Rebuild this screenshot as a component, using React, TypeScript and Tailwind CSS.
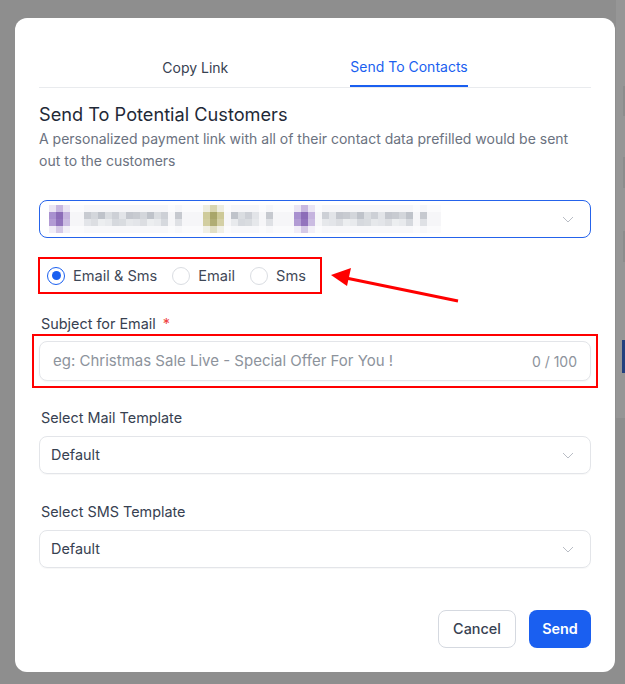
import React from "react";

const F = { fontFamily: "Inter, 'Noto Sans', sans-serif" };

type Col = string[];
const faint: Col = ["#fbfbfc", "#f6f6f8", "#f6f6f8", "#fbfbfc"];
const purple: Col[] = [
  ["#ebe5f3", "#a890cf", "#b29bd4", "#f1edf7"],
  ["#c9b8e0", "#8c6cb8", "#9273bd", "#d5c9e6"],
  ["#ebe5f3", "#c5b3de", "#cbbce2", "#f3f0f8"],
];
const olive: Col[] = [
  ["#eeeddf", "#cfcb9b", "#d2cea0", "#f1f0e6"],
  ["#d9d6b0", "#a9a66a", "#b0ad74", "#e1dfc5"],
  ["#eeeddf", "#cdc997", "#d4d0a5", "#f1f0e6"],
];
const g1 = ["#c8cbd1", "#d3d6db", "#bfc3ca", "#dadde1", "#cdd0d6", "#e2e4e8", "#c4c7ce"];
const g2 = ["#e3e5e9", "#d9dce0", "#e8eaed", "#dcdee2", "#e6e8eb", "#d6d9de", "#eceef0"];
const text = (n: number, o = 0): Col[] =>
  Array.from({ length: n }, (_, i) => [
    "#f6f6f8",
    g1[(i + o) % g1.length],
    g2[(i * 3 + o) % g2.length],
    "#f8f8fa",
  ]);
const small: Col = ["#f6f6f8", "#c6c9cf", "#dfe1e5", "#f8f8fa"];

const cols: Col[] = [
  ...purple,
  faint,
  faint,
  ...text(12, 0),
  faint,
  small,
  faint,
  faint,
  faint,
  ...olive,
  faint,
  ...text(4, 2),
  faint,
  small,
  faint,
  faint,
  faint,
  ...purple,
  faint,
  ...text(13, 4),
  faint,
  small,
  faint,
  faint,
];

function Chevron() {
  return (
    <svg width="12" height="7" viewBox="0 0 12 7" fill="none">
      <path d="M1 1l5 5 5-5" stroke="#b9bdc5" strokeWidth="1" />
    </svg>
  );
}

function Radio({ checked, label }: { checked?: boolean; label: string }) {
  return (
    <div className="flex items-center gap-[8px]">
      {checked ? (
        <span className="w-[18px] h-[18px] rounded-full border border-[#1a5ff0] flex items-center justify-center">
          <span className="w-[9px] h-[9px] rounded-full bg-[#1a5ff0]" />
        </span>
      ) : (
        <span className="w-[18px] h-[18px] rounded-full border border-[#dadde2]" />
      )}
      <span className="text-[14.6px] leading-5 text-[#3f4857]">{label}</span>
    </div>
  );
}

function SelectBox({ value }: { value: string }) {
  return (
    <div className="h-[38px] rounded-lg border border-[#e3e5e9] flex items-center justify-between pl-[11px] pr-[16px] shadow-[0_1px_1px_rgba(0,0,0,0.03)]">
      <span className="text-[14.4px] text-[#374151]">{value}</span>
      <Chevron />
    </div>
  );
}

export default function App() {
  return (
    <div className="relative w-full h-[684px] bg-[#8e8e8e] overflow-hidden pt-[18px] pl-[15px]" style={F}>
      {/* background page fragments under overlay */}
      <div className="absolute right-0 top-0 w-[9px] h-[418px] bg-[#969696]">
        <div className="absolute right-0 top-[86px] w-[2px] h-[30px] bg-[#8c8c8c]" />
        <div className="absolute right-0 top-[157px] w-[2px] h-[31px] bg-[#8c8c8c]" />
        <div className="absolute right-0 top-[231px] w-[2px] h-[31px] bg-[#8c8c8c]" />
        <div className="absolute right-0 top-[340px] w-[3px] h-[33px] bg-[#22407f]" />
      </div>

      <div className="relative w-[600px] h-[654px] bg-white rounded-[12px] px-6 pt-[29px]">
        {/* Tabs */}
        <div className="flex justify-center gap-[122px] border-b border-[#e9ebee] h-[41px]">
          <div className="flex items-center pt-[1px] text-[14px] text-[#374151]">Copy Link</div>
          <div className="flex items-center pt-[1px] text-[14px] text-[#1a5ff0] border-b-2 border-[#1a5ff0]">Send To Contacts</div>
        </div>

        <h2 className="mt-[12px] text-[18.2px] leading-7 text-[#1f2937]">Send To Potential Customers</h2>
        <p className="text-[14px] leading-[22px] text-[#6b7280]">
          A personalized payment link with all of their contact data prefilled would be sent out to the customers
        </p>

        {/* Multi select */}
        <div className="mt-7 h-[38px] rounded-lg border border-[#2563eb] flex items-center justify-between pl-[9px] pr-[16px]">
          <div className="flex">
            {cols.map((c, i) => (
              <div key={i} className="flex flex-col">
                {c.map((color, j) => (
                  <div key={j} className="w-[7px] h-[7px]" style={{ backgroundColor: color }} />
                ))}
              </div>
            ))}
          </div>
          <Chevron />
        </div>

        {/* Radio group */}
        <div className="mt-[19px] -ml-[1px] w-[284px] h-[37px] border-2 border-[#ff0000] flex items-center gap-[15px] pl-[7px]">
          <Radio checked label="Email & Sms" />
          <Radio label="Email" />
          <Radio label="Sms" />
        </div>

        {/* Subject */}
        <div className="mt-5 pl-[2px] text-[14.4px] leading-5 text-[#374151]">
          Subject for Email <span className="ml-[3px] text-[#ef4444]">*</span>
        </div>
        <div className="relative mt-[7px]">
          <div className="absolute -inset-[7px] border-2 border-[#ff0000]" />
          <div className="relative h-[40px] rounded-lg border border-[#e3e5e9] flex items-center justify-between pl-[13px] pr-[13px] shadow-[0_1px_2px_rgba(0,0,0,0.04)] bg-white">
            <span className="text-[15px] text-[#8d939c]">eg: Christmas Sale Live - Special Offer For You !</span>
            <span className="text-[14px] text-[#8d939c]">0 / 100</span>
          </div>
        </div>

        <div className="mt-[27px] pl-[2px] text-[14.4px] leading-5 text-[#374151]">Select Mail Template</div>
        <div className="mt-2">
          <SelectBox value="Default" />
        </div>

        <div className="mt-7 pl-[2px] text-[14.4px] leading-5 text-[#374151]">Select SMS Template</div>
        <div className="mt-2">
          <SelectBox value="Default" />
        </div>

        <div className="mt-[42px] flex justify-end gap-[13px]">
          <button className="h-[38px] w-[78px] rounded-lg border border-[#d5d9e0] text-[14.4px] font-medium text-[#374151] bg-white">
            Cancel
          </button>
          <button className="h-[38px] w-[62px] rounded-lg bg-[#1a5ff0] text-[14.4px] font-semibold text-white">
            Send
          </button>
        </div>
      </div>

      {/* annotation arrow */}
      <svg className="absolute left-0 top-0 pointer-events-none" width="625" height="684">
        <line x1="458" y1="301" x2="346" y2="278" stroke="#ff0000" strokeWidth="3" />
        <polygon points="331,275 351,268 347,286" fill="#ff0000" />
      </svg>
    </div>
  );
}
